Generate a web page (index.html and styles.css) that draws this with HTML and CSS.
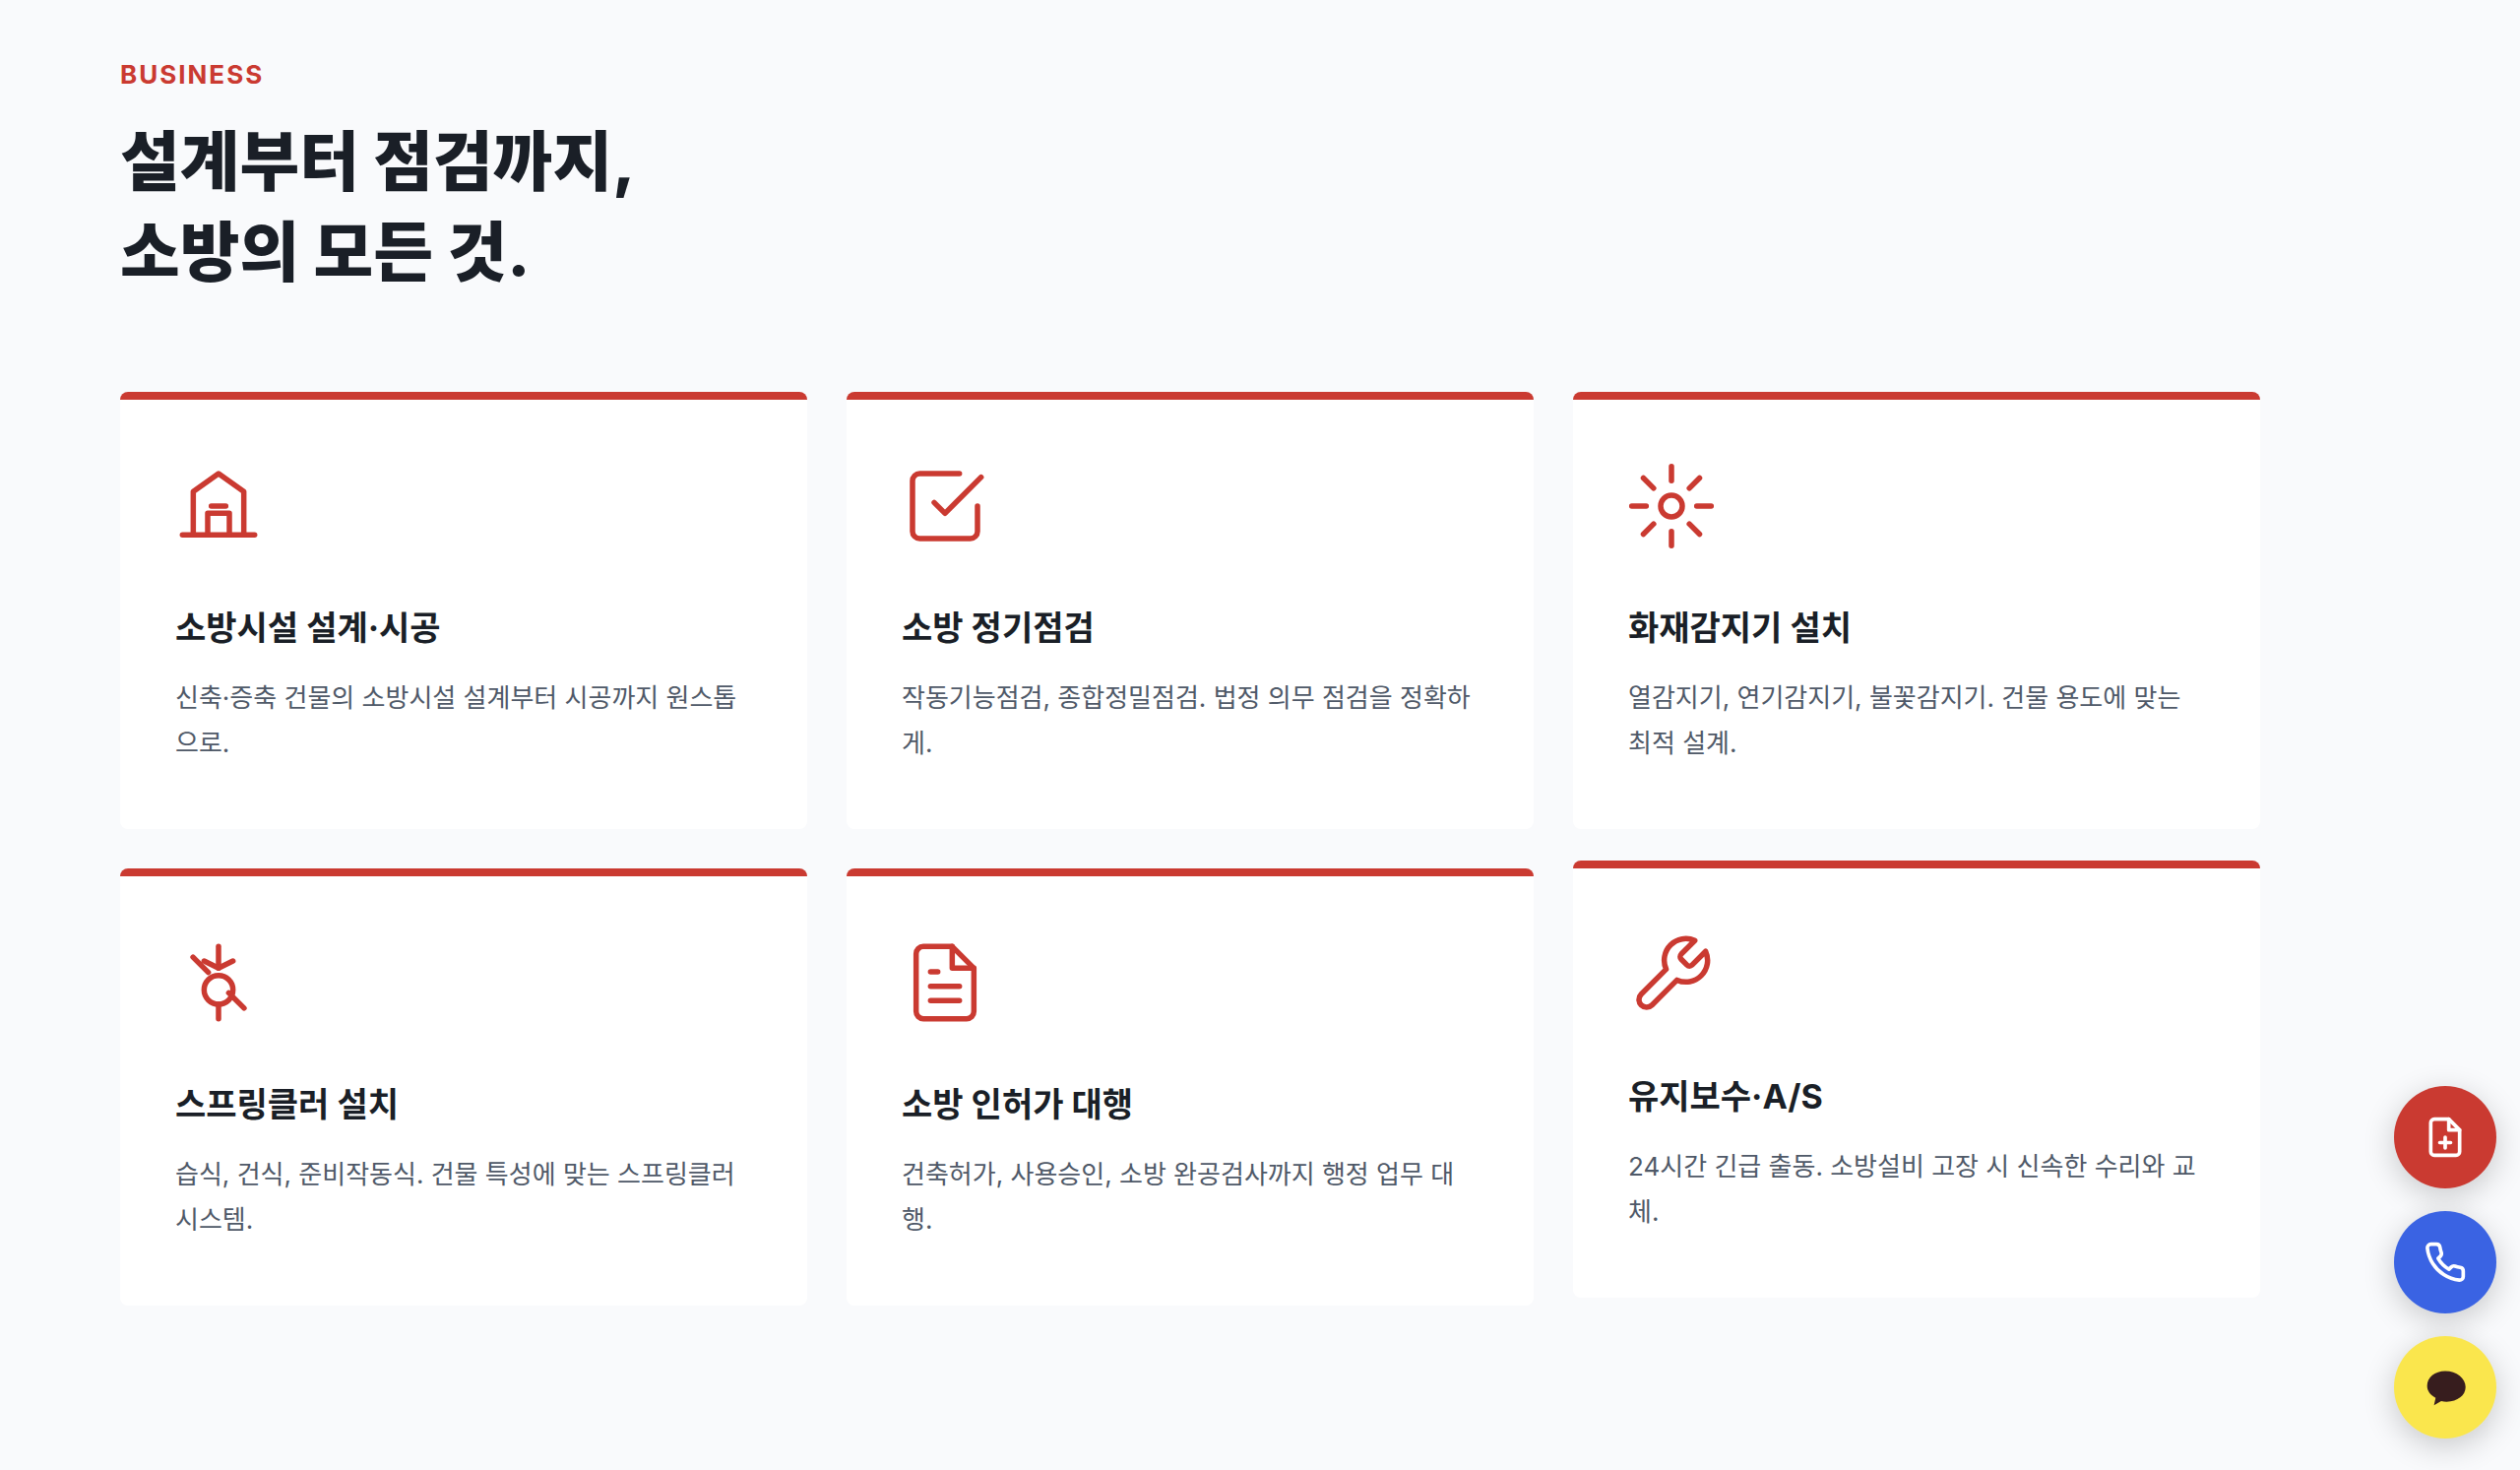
FILE: index.html
```html
<!DOCTYPE html>
<html lang="ko">
<head>
    <meta charset="UTF-8">
    <meta name="viewport" content="width=device-width, initial-scale=1.0">
    <title>소방의 모든 것</title>
    <link rel="stylesheet" href="styles.css">
</head>
<body>
    <!-- Business -->
    <section class="business">
        <p class="section-label">BUSINESS</p>
        <h2 class="section-title">설계부터 점검까지,<br>소방의 모든 것.</h2>

        <div class="card-grid">
            <div class="card">
                <svg class="card-icon" viewBox="0 0 24 24" aria-hidden="true">
                    <path d="M2 20h20"/>
                    <path d="M5 20V8l7-5 7 5v12"/>
                    <path d="M9 20v-6h6v6"/>
                    <path d="M10 12h4"/>
                </svg>
                <h3>소방시설 설계·시공</h3>
                <p>신축·증축 건물의 소방시설 설계부터 시공까지 원스톱으로.</p>
            </div>
            <div class="card">
                <svg class="card-icon" viewBox="0 0 24 24" aria-hidden="true">
                    <path d="M9 11l3 3L22 4"/>
                    <path d="M21 12v7a2 2 0 0 1-2 2H5a2 2 0 0 1-2-2V5a2 2 0 0 1 2-2h11"/>
                </svg>
                <h3>소방 정기점검</h3>
                <p>작동기능점검, 종합정밀점검. 법정 의무 점검을 정확하게.</p>
            </div>
            <div class="card">
                <svg class="card-icon" viewBox="0 0 24 24" aria-hidden="true">
                    <circle cx="12" cy="12" r="3"/>
                    <path d="M12 1v4M12 19v4M1 12h4M19 12h4"/>
                    <path d="M4.22 4.22l2.83 2.83M16.95 16.95l2.83 2.83M4.22 19.78l2.83-2.83M16.95 7.05l2.83-2.83"/>
                </svg>
                <h3>화재감지기 설치</h3>
                <p>열감지기, 연기감지기, 불꽃감지기. 건물 용도에 맞는 최적 설계.</p>
            </div>
            <div class="card">
                <svg class="card-icon" viewBox="0 0 24 24" aria-hidden="true">
                    <path d="M12 2v6"/>
                    <path d="M8 6l4 2 4-2"/>
                    <circle cx="12" cy="14" r="4"/>
                    <path d="M12 18v4"/>
                    <path d="M4.93 4.93l4.24 4.24M14.83 14.83l4.24 4.24"/>
                </svg>
                <h3>스프링클러 설치</h3>
                <p>습식, 건식, 준비작동식. 건물 특성에 맞는 스프링클러 시스템.</p>
            </div>
            <div class="card">
                <svg class="card-icon" viewBox="0 0 24 24" aria-hidden="true">
                    <path d="M14 2H6a2 2 0 0 0-2 2v16a2 2 0 0 0 2 2h12a2 2 0 0 0 2-2V8z"/>
                    <path d="M14 2v6h6"/>
                    <path d="M16 13H8M16 17H8M10 9H8"/>
                </svg>
                <h3>소방 인허가 대행</h3>
                <p>건축허가, 사용승인, 소방 완공검사까지 행정 업무 대행.</p>
            </div>
            <div class="card active">
                <svg class="card-icon" viewBox="0 0 24 24" aria-hidden="true">
                    <path d="M14.7 6.3a1 1 0 0 0 0 1.4l1.6 1.6a1 1 0 0 0 1.4 0l3.77-3.77a6 6 0 0 1-7.94 7.94l-6.91 6.91a2.12 2.12 0 0 1-3-3l6.91-6.91a6 6 0 0 1 7.94-7.94l-3.76 3.76z"/>
                </svg>
                <h3>유지보수·A/S</h3>
                <p>24시간 긴급 출동. 소방설비 고장 시 신속한 수리와 교체.</p>
            </div>
        </div>
    </section>

    <!-- Floating Buttons -->
    <div class="floating">
        <a href="#estimate" class="float-btn estimate" aria-label="견적 문의">
            <svg viewBox="0 0 24 24" aria-hidden="true">
                <path d="M14 2H6a2 2 0 0 0-2 2v16a2 2 0 0 0 2 2h12a2 2 0 0 0 2-2V8z"/>
                <path d="M14 2v6h6"/>
                <path d="M12 18v-6M9 15h6"/>
            </svg>
        </a>
        <a href="#call" class="float-btn call" aria-label="전화 상담">
            <svg viewBox="0 0 24 24" aria-hidden="true">
                <path d="M22 16.92v3a2 2 0 0 1-2.18 2 19.79 19.79 0 0 1-8.63-3.07 19.5 19.5 0 0 1-6-6 19.79 19.79 0 0 1-3.07-8.67A2 2 0 0 1 4.11 2h3a2 2 0 0 1 2 1.72c.13.96.36 1.9.7 2.81a2 2 0 0 1-.45 2.11L8.09 9.91a16 16 0 0 0 6 6l1.27-1.27a2 2 0 0 1 2.11-.45c.91.34 1.85.57 2.81.7A2 2 0 0 1 22 16.92z"/>
            </svg>
        </a>
        <a href="#kakao" class="float-btn kakao" aria-label="카카오톡 상담">
            <svg viewBox="0 0 24 24" aria-hidden="true">
                <path d="M12 3C6.3 3 2 6.6 2 11.2c0 2.800 1.700 5.100 4.700 6.600L5.800 22l4-2.300c1 .2 2 .3 3 .3 6 0 10.500-3.500 10.500-8.100C23.300 7 18.300 3 12 3z"/>
            </svg>
        </a>
    </div>
</body>
</html>
```

FILE: styles.css
```css
* {
    margin: 0;
    padding: 0;
    box-sizing: border-box;
}
body {
    background-color: #f9fafc;
    color: #1a1f27;
    font-family: Inter, "Noto Sans CJK KR", sans-serif;
}
/* Business */
.business {
    padding: 58px 264px 168px 122px;
}
.section-label {
    color: #ca3a31;
    font-size: 26px;
    font-weight: 700;
    line-height: 36px;
    letter-spacing: 2px;
    margin-bottom: 24px;
}
.section-title {
    font-size: 66px;
    font-weight: 800;
    line-height: 92px;
    margin-bottom: 96px;
}
.card-grid {
    display: grid;
    grid-template-columns: repeat(3, 1fr);
    gap: 40px;
}
.card {
    background: white;
    border-top: 8px solid #ca3a31;
    border-radius: 8px;
    padding: 64px 56px;
}
.card.active {
    transform: translateY(-8px);
}
.card-icon {
    display: block;
    width: 88px;
    height: 88px;
    margin-bottom: 56px;
    fill: none;
    stroke: #ca3a31;
    stroke-width: 1.5;
    stroke-linecap: round;
    stroke-linejoin: round;
}
.card h3 {
    font-size: 34px;
    font-weight: 700;
    line-height: 48px;
    margin-bottom: 24px;
}
.card p {
    color: #4f5968;
    font-size: 26px;
    line-height: 46px;
}
/* Floating Buttons */
.floating {
    position: fixed;
    right: 24px;
    bottom: 32px;
    display: flex;
    flex-direction: column;
    gap: 23px;
}
.float-btn {
    display: flex;
    align-items: center;
    justify-content: center;
    width: 104px;
    height: 104px;
    border-radius: 50%;
    box-shadow: 0 8px 32px rgba(0, 0, 0, 0.2);
}
.float-btn svg {
    width: 44px;
    height: 44px;
    fill: none;
    stroke: white;
    stroke-width: 2;
    stroke-linecap: round;
    stroke-linejoin: round;
}
.estimate {
    background: #ca3a31;
}
.call {
    background: #3a63e3;
}
.kakao {
    background: #fae64d;
}
.kakao svg {
    fill: #371d1e;
    stroke: none;
}
```
